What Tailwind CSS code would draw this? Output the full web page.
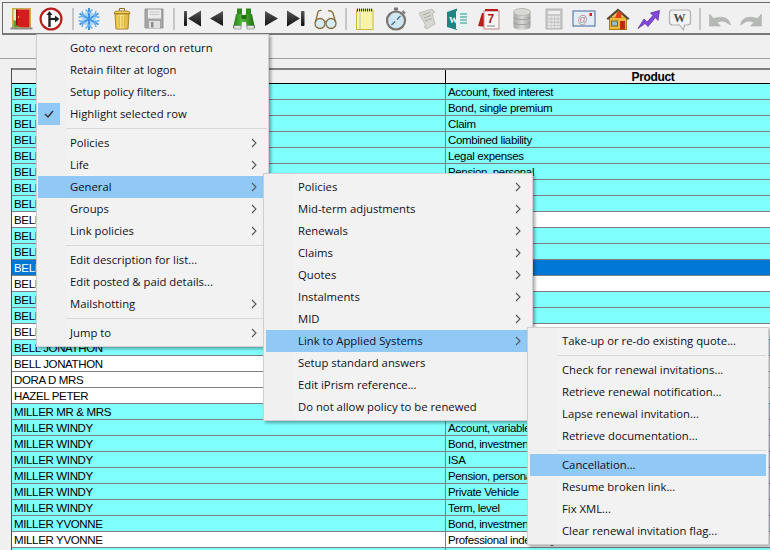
<!doctype html>
<html><head><meta charset="utf-8">
<script src="https://cdn.jsdelivr.net/npm/@tailwindcss/browser@4"></script>
</head>
<body class="m-0">
<div class="relative w-[770px] h-[550px] overflow-hidden bg-[#f0f0f0] font-['Liberation_Sans',sans-serif] text-black">
  <svg class="absolute w-0 h-0" aria-hidden="true"><defs>
    <linearGradient id="dk" x1="0" y1="0" x2="0" y2="1"><stop offset="0" stop-color="#555"/><stop offset=".5" stop-color="#333"/><stop offset="1" stop-color="#111"/></linearGradient>
    <linearGradient id="gold" x1="0" y1="0" x2="1" y2="0"><stop offset="0" stop-color="#e8bd3c"/><stop offset=".45" stop-color="#fbe887"/><stop offset="1" stop-color="#dca92e"/></linearGradient>
    <linearGradient id="gr" x1="0" y1="0" x2="1" y2="0"><stop offset="0" stop-color="#a8a8a6"/><stop offset=".5" stop-color="#d8d8d6"/><stop offset="1" stop-color="#a4a4a2"/></linearGradient>
    <linearGradient id="grn" x1="0" y1="0" x2="1" y2="0"><stop offset="0" stop-color="#257a18"/><stop offset=".4" stop-color="#55b83a"/><stop offset="1" stop-color="#1f6f14"/></linearGradient>
  </defs></svg>
  <!-- toolbar -->
  <div class="flex items-center mt-[2px] ml-[2px] h-[33px] pt-[2px] border-t border-l border-b-2 border-t-[#696969] border-l-[#696969] border-b-[#787878]">
    <svg class="w-6 h-6 ml-[6px] shrink-0" viewBox="0 0 24 24"><rect x="3" y="1" width="19" height="20" fill="#cfa84e"/><rect x="4.5" y="2.5" width="16" height="18" fill="#dff0d0"/><path d="M4.5 13l6 2v5.500h-6z" fill="#4fa52c"/><path d="M7 2.500h13.500v18H12L7 18z" fill="#d41c1c"/><path d="M7 2.500h1.500v16L7 18z" fill="#8d1010"/><circle cx="9.500" cy="10" r=".8" fill="#f3d56e"/><rect x="1.500" y="20.500" width="22" height="2" fill="#8c8c84"/></svg>
    <svg class="w-6 h-6 ml-[6px] shrink-0" viewBox="0 0 24 24"><circle cx="12" cy="12" r="10.400" fill="#fff" stroke="#b81e1e" stroke-width="2.200"/><path d="M10.500 20V7" stroke="#222" stroke-width="2.400" fill="none"/><path d="M7.500 8l3-4 3 4z" fill="#222"/><path d="M11 12h6" stroke="#222" stroke-width="2.200"/><path d="M16 8.500l4.500 3.500-4.500 3.500z" fill="#222"/></svg>
    <div class="w-[2px] h-[22px] ml-[9px] bg-[#c6c6c6] shrink-0"></div>
    <svg class="w-6 h-6 ml-[3px] shrink-0" viewBox="0 0 24 24"><path d="M12 4l7 4v8l-7 4-7-4V8z" fill="#a8d4f6"/><g stroke="#3f92e2" stroke-width="2" fill="none"><path d="M12 1v22M2.500 6.500l19 11M21.500 6.500l-19 11"/></g><g stroke="#69b0ee" stroke-width="1.500" fill="none"><path d="M8.500 2.500L12 6l3.500-3.500M8.500 21.500L12 18l3.500 3.500M1.500 10.500L6.500 9 5 4M22.500 13.500L17.500 15l1.500 5M22.500 10.500L17.500 9 19 4M1.500 13.500L6.500 15 5 20"/></g></svg>
    <svg class="w-6 h-6 ml-[9px] shrink-0" viewBox="0 0 24 24"><path d="M5 7h14l-1 15H6z" fill="url(#gold)" stroke="#ad842a"/><path d="M9 9l.4 11M12 9v11M15 9l-.4 11" stroke="#d8ad3c"/><path d="M4 6.500q0-2 3-2.500h10q3 .5 3 2.500z" fill="#f2d05e" stroke="#ad842a"/><path d="M9.500 3.500V1.500h5v2" fill="none" stroke="#8a6a24"/></svg>
    <svg class="w-6 h-6 ml-[8px] shrink-0" viewBox="0 0 24 24"><path d="M3 2h18v19H3z" fill="#a6a6a6" stroke="#949494"/><rect x="6" y="2.500" width="13" height="9" fill="#ececec"/><path d="M7.500 5h10M7.500 7.500h10" stroke="#c4c4c4"/><rect x="7" y="14" width="11" height="7" fill="#e0e0e0"/><rect x="9" y="15" width="2.500" height="5.500" fill="#8c8c8c"/></svg>
    <div class="w-[2px] h-[22px] ml-[7px] bg-[#c6c6c6] shrink-0"></div>
    <svg class="w-6 h-6 ml-[5px] shrink-0" viewBox="0 0 24 24"><rect x="4" y="4" width="3" height="15" rx=".8" fill="url(#dk)"/><path d="M21 3.500v16L8 11.500z" fill="url(#dk)"/></svg>
    <svg class="w-6 h-6 shrink-0" viewBox="0 0 24 24"><path d="M19 4v15L6 11.500z" fill="url(#dk)"/></svg>
    <svg class="w-6 h-6 ml-[4px] shrink-0" viewBox="0 0 24 24"><rect x="5" y="1.500" width="5" height="6" fill="#2a8a1c"/><rect x="14" y="1.500" width="5" height="6" fill="#2a8a1c"/><path d="M4 7h6.500v3h3V7H20l3 14h-8l-1-6h-4l-1 6H1z" fill="url(#grn)"/><rect x="9.500" y="8" width="5" height="4" fill="#1f6f14"/><rect x="2" y="18.500" width="7" height="3.500" fill="#dfe6da" stroke="#667"  stroke-width=".5"/><rect x="15" y="18.500" width="7" height="3.500" fill="#dfe6da" stroke="#667" stroke-width=".5"/></svg>
    <svg class="w-6 h-6 ml-[5px] shrink-0" viewBox="0 0 24 24"><path d="M4 4v15l13-7.500z" fill="url(#dk)"/></svg>
    <svg class="w-6 h-6 ml-[-1px] shrink-0" viewBox="0 0 24 24"><path d="M3 3.500v16l13-8z" fill="url(#dk)"/><rect x="17" y="4" width="3.500" height="15" rx=".8" fill="url(#dk)"/></svg>
    <svg class="w-6 h-6 ml-[5px] shrink-0" viewBox="0 0 24 24"><g fill="#d4ecf6" stroke="#8a6c3c" stroke-width="1.300"><circle cx="7" cy="16.500" r="5"/><circle cx="18" cy="16.500" r="5"/></g><path d="M11.500 15q1-1 2 0M2.500 15L5 5q.8-2 3.500-1.500M22.500 15L20 6q-1.500-3-5-2" fill="none" stroke="#8a6c3c" stroke-width="1.300"/></svg>
    <div class="w-[2px] h-[22px] ml-[8px] bg-[#c6c6c6] shrink-0"></div>
    <svg class="w-6 h-6 ml-[6px] shrink-0" viewBox="0 0 24 24"><rect x="3.500" y="3" width="16.500" height="19.500" fill="#f8f3a6" stroke="#c9b93c"/><path d="M4 3h16" stroke="#2a20c8" stroke-width="3" stroke-dasharray="1 1"/><path d="M7 5v17" stroke="#a8c8e0"/></svg>
    <svg class="w-6 h-6 ml-[7px] shrink-0" viewBox="0 0 24 24"><rect x="10" y="0.500" width="4" height="3" fill="#777"/><path d="M18.500 4l2.500 2.500" stroke="#777" stroke-width="2"/><circle cx="12" cy="13.500" r="9" fill="#cfe6f0" stroke="#76746c" stroke-width="2.200"/><path d="M7.500 18l5-5 4-4" stroke="#3a6ea0" stroke-width="1.300"/><circle cx="12" cy="13.500" r="1.200" fill="#eee"/></svg>
    <svg class="w-6 h-6 ml-[7px] shrink-0" viewBox="0 0 24 24"><path d="M4 6l13-4 3 3-3 1 3 11q-4 2-8 5l-3-2 1.500-2z" fill="#d6d6d2" stroke="#bdbdb8"/><path d="M8 8l7-2.500M9 11l7-2.500M10 14l7-2.500" stroke="#a8a8a2"/></svg>
    <svg class="w-6 h-6 ml-[7px] shrink-0" viewBox="0 0 24 24"><path d="M1 5l10-3.500V23L1 20z" fill="#1f8582"/><path d="M10 4h12v18H10z" fill="#e6f4f2"/><text x="3" y="16" font-family="Liberation Serif, serif" font-weight="700" font-size="9" fill="#fff">W</text><path d="M14 7h7M14 10h7M14 13h7M14 16h7" stroke="#2f8f8c"/></svg>
    <svg class="w-6 h-6 ml-[7px] shrink-0" viewBox="0 0 24 24"><path d="M1 19L5 6h4v14z" fill="#b81c1c"/><rect x="7" y="4" width="15" height="18" fill="#f4f4f4" stroke="#c48a8a"/><rect x="8" y="2" width="13" height="2" fill="#b81c1c"/><text x="10.500" y="15.500" font-family="Liberation Sans, sans-serif" font-weight="700" font-size="12" fill="#b01818">7</text><path d="M10 19h8" stroke="#888"/></svg>
    <svg class="w-6 h-6 ml-[9px] shrink-0" viewBox="0 0 24 24"><path d="M3.500 5v15c0 3.500 17 3.500 17 0V5z" fill="url(#gr)"/><ellipse cx="12" cy="5" rx="8.500" ry="3.500" fill="#d8d8d4" stroke="#b8b8b4"/><path d="M3.500 10c0 3.500 17 3.500 17 0M3.500 15c0 3.500 17 3.500 17 0" fill="none" stroke="#a2a29e"/></svg>
    <svg class="w-6 h-6 ml-[8px] shrink-0" viewBox="0 0 24 24"><rect x="4" y="2" width="16" height="20" fill="#c8c8c8" stroke="#b4b4b4"/><rect x="6" y="4" width="12" height="3" fill="#efefef"/><path d="M6 10h12M6 13.500h12M6 17h12M6 20h12" stroke="#e8e8e8" stroke-dasharray="2.500 1" stroke-width="2"/></svg>
    <svg class="w-6 h-6 ml-[6px] shrink-0" viewBox="0 0 24 24"><rect x="1" y="4" width="22" height="15" fill="#e4ecf6" stroke="#5d7ea8" stroke-width="1.200"/><text x="5.500" y="15.500" font-family="Liberation Sans, sans-serif" font-size="10" fill="#b58a8a">@</text><rect x="17.500" y="6" width="2.500" height="3" fill="#e01818"/></svg>
    <svg class="w-6 h-6 ml-[10px] shrink-0" viewBox="0 0 24 24"><rect x="3.500" y="10" width="17" height="12.500" fill="#f0ba3a" stroke="#a87c1c"/><path d="M5 10l7-6 7 6z" fill="#f2c75a"/><path d="M.5 11.500L12 1.500l11.500 10-1.500 1.500L12 4.500 2 13z" fill="#5a4a38"/><path d="M9 11l3-8 1.500 3.500L16 4l-1 7z" fill="#e63a18"/><rect x="5.500" y="14" width="6" height="5" fill="#8fc0d8" stroke="#806020"/><rect x="14" y="14" width="5" height="8.500" fill="#c02810"/></svg>
    <svg class="w-6 h-6 ml-[7px] shrink-0" viewBox="0 0 24 24"><path d="M1 21.500l6-9.500 3 3 6-6.500-2.500-2.500 9-2.500-1.500 10-2.500-3-7.500 9-3-3z" fill="#8347dc" stroke="#52289a" stroke-width=".7"/></svg>
    <svg class="w-6 h-6 ml-[7px] shrink-0" viewBox="0 0 24 24"><path d="M1.500 6q0-3 3-3h15q3 0 3 3v9q0 3-3 3h-3l-1 5-4-5h-7q-3 0-3-3z" fill="#f2f2f2" stroke="#b0b0b0" stroke-width="1.200"/><text x="5.500" y="15" font-family="Liberation Serif, serif" font-weight="700" font-size="12" fill="#4a4a4a">W</text></svg>
    <div class="w-[2px] h-[22px] ml-[7px] bg-[#c6c6c6] shrink-0"></div>
    <svg class="w-6 h-6 ml-[7px] shrink-0" viewBox="0 0 24 24"><path d="M1.500 7v12h11l-3.500-3.500q6-3.500 11 1l2.500 1.500q-2-11-17-6.500L1.500 7z" fill="#b6b8b6" stroke="#a4a6a4" stroke-width=".5"/></svg>
    <svg class="w-6 h-6 ml-[7px] shrink-0" viewBox="0 0 24 24"><path d="M22.500 7v12h-11l3.500-3.500q-6-3.500-11 1l-2.500 1.500q2-11 17-6.500L22.500 7z" fill="#b6b8b6" stroke="#a4a6a4" stroke-width=".5"/></svg>
  </div>
  <!-- filter band -->
  <div class="h-[24px] border-b border-[#a0a0a0]"></div>
  <!-- grid -->
  <div class="mt-[9px] ml-[11px] border-l border-[#505050] text-[11.5px] leading-[17px] tracking-[-0.35px]">
    <div class="flex h-[16px] border-t-2 border-b border-t-[#808080] border-b-black font-bold text-[12px] leading-[15px]">
      <div class="w-[434px] border-r border-black shrink-0"></div>
      <div class="w-[414px] shrink-0 text-center">Product</div>
    </div>
    <div class="flex h-4 bg-[#80ffff] border-b border-[#808080]"><div class="w-[434px] pl-[2px] border-r border-[#808080]">BELL JONATHON</div><div class="flex-1 pl-[2px]">Account, fixed interest</div></div>
    <div class="flex h-4 bg-[#80ffff] border-b border-[#808080]"><div class="w-[434px] pl-[2px] border-r border-[#808080]">BELL JONATHON</div><div class="flex-1 pl-[2px]">Bond, single premium</div></div>
    <div class="flex h-4 bg-[#80ffff] border-b border-[#808080]"><div class="w-[434px] pl-[2px] border-r border-[#808080]">BELL JONATHON</div><div class="flex-1 pl-[2px]">Claim</div></div>
    <div class="flex h-4 bg-[#80ffff] border-b border-[#808080]"><div class="w-[434px] pl-[2px] border-r border-[#808080]">BELL JONATHON</div><div class="flex-1 pl-[2px]">Combined liability</div></div>
    <div class="flex h-4 bg-[#80ffff] border-b border-[#808080]"><div class="w-[434px] pl-[2px] border-r border-[#808080]">BELL JONATHON</div><div class="flex-1 pl-[2px]">Legal expenses</div></div>
    <div class="flex h-4 bg-[#80ffff] border-b border-[#808080]"><div class="w-[434px] pl-[2px] border-r border-[#808080]">BELL JONATHON</div><div class="flex-1 pl-[2px]">Pension, personal</div></div>
    <div class="flex h-4 bg-[#80ffff] border-b border-[#808080]"><div class="w-[434px] pl-[2px] border-r border-[#808080]">BELL JONATHON</div><div class="flex-1 pl-[2px]"></div></div>
    <div class="flex h-4 bg-[#80ffff] border-b border-[#808080]"><div class="w-[434px] pl-[2px] border-r border-[#808080]">BELL JONATHON</div><div class="flex-1 pl-[2px]"></div></div>
    <div class="flex h-4 bg-white border-b border-[#808080]"><div class="w-[434px] pl-[2px] border-r border-[#808080]">BELL JONATHON</div><div class="flex-1 pl-[2px]"></div></div>
    <div class="flex h-4 bg-[#80ffff] border-b border-[#808080]"><div class="w-[434px] pl-[2px] border-r border-[#808080]">BELL JONATHON</div><div class="flex-1 pl-[2px]"></div></div>
    <div class="flex h-4 bg-[#80ffff] border-b border-[#808080]"><div class="w-[434px] pl-[2px] border-r border-[#808080]">BELL JONATHON</div><div class="flex-1 pl-[2px]"></div></div>
    <div class="flex h-4 bg-[#0078d7] text-white border-b border-[#808080]"><div class="w-[434px] pl-[2px]">BELL JONATHON</div><div class="flex-1 pl-[2px]"></div></div>
    <div class="flex h-4 bg-white border-b border-[#808080]"><div class="w-[434px] pl-[2px] border-r border-[#808080]">BELL JONATHON</div><div class="flex-1 pl-[2px]"></div></div>
    <div class="flex h-4 bg-[#80ffff] border-b border-[#808080]"><div class="w-[434px] pl-[2px] border-r border-[#808080]">BELL JONATHON</div><div class="flex-1 pl-[2px]"></div></div>
    <div class="flex h-4 bg-[#80ffff] border-b border-[#808080]"><div class="w-[434px] pl-[2px] border-r border-[#808080]">BELL JONATHON</div><div class="flex-1 pl-[2px]"></div></div>
    <div class="flex h-4 bg-white border-b border-[#808080]"><div class="w-[434px] pl-[2px] border-r border-[#808080]">BELL JONATHON</div><div class="flex-1 pl-[2px]"></div></div>
    <div class="flex h-4 bg-[#80ffff] border-b border-[#808080]"><div class="w-[434px] pl-[2px] border-r border-[#808080]">BELL JONATHON</div><div class="flex-1 pl-[2px]"></div></div>
    <div class="flex h-4 bg-white border-b border-[#808080]"><div class="w-[434px] pl-[2px] border-r border-[#808080]">BELL JONATHON</div><div class="flex-1 pl-[2px]"></div></div>
    <div class="flex h-4 bg-white border-b border-[#808080]"><div class="w-[434px] pl-[2px] border-r border-[#808080]">DORA D MRS</div><div class="flex-1 pl-[2px]"></div></div>
    <div class="flex h-4 bg-white border-b border-[#808080]"><div class="w-[434px] pl-[2px] border-r border-[#808080]">HAZEL PETER</div><div class="flex-1 pl-[2px]"></div></div>
    <div class="flex h-4 bg-[#80ffff] border-b border-[#808080]"><div class="w-[434px] pl-[2px] border-r border-[#808080]">MILLER MR &amp; MRS</div><div class="flex-1 pl-[2px]"></div></div>
    <div class="flex h-4 bg-[#80ffff] border-b border-[#808080]"><div class="w-[434px] pl-[2px] border-r border-[#808080]">MILLER WINDY</div><div class="flex-1 pl-[2px]">Account, variable</div></div>
    <div class="flex h-4 bg-[#80ffff] border-b border-[#808080]"><div class="w-[434px] pl-[2px] border-r border-[#808080]">MILLER WINDY</div><div class="flex-1 pl-[2px]">Bond, investment</div></div>
    <div class="flex h-4 bg-[#80ffff] border-b border-[#808080]"><div class="w-[434px] pl-[2px] border-r border-[#808080]">MILLER WINDY</div><div class="flex-1 pl-[2px]">ISA</div></div>
    <div class="flex h-4 bg-[#80ffff] border-b border-[#808080]"><div class="w-[434px] pl-[2px] border-r border-[#808080]">MILLER WINDY</div><div class="flex-1 pl-[2px]">Pension, personal</div></div>
    <div class="flex h-4 bg-[#80ffff] border-b border-[#808080]"><div class="w-[434px] pl-[2px] border-r border-[#808080]">MILLER WINDY</div><div class="flex-1 pl-[2px]">Private Vehicle</div></div>
    <div class="flex h-4 bg-[#80ffff] border-b border-[#808080]"><div class="w-[434px] pl-[2px] border-r border-[#808080]">MILLER WINDY</div><div class="flex-1 pl-[2px]">Term, level</div></div>
    <div class="flex h-4 bg-[#80ffff] border-b border-[#808080]"><div class="w-[434px] pl-[2px] border-r border-[#808080]">MILLER YVONNE</div><div class="flex-1 pl-[2px]">Bond, investment</div></div>
    <div class="flex h-4 bg-white border-b border-[#808080]"><div class="w-[434px] pl-[2px] border-r border-[#808080]">MILLER YVONNE</div><div class="flex-1 pl-[2px]">Professional indemnity</div></div>
    <div class="flex h-4 bg-[#80ffff] border-b border-[#808080]"><div class="w-[434px] border-r border-[#808080]"></div><div class="flex-1"></div></div>
  </div>

  <!-- menu 1 -->
  <div class="absolute left-[36px] top-[34px] w-[233px] h-[313px] bg-[linear-gradient(to_right,#f0f0f0_30px,#f2f2f2_30px)] border border-[#cfcfcf] shadow-[2px_2px_3px_rgba(0,0,0,0.35)] py-[2px] px-[1px] font-['Open_Sans',sans-serif] text-[11.3px] text-[#10101a]">
    <div class="flex items-center h-[22px] pl-[32px]">Goto next record on return</div>
    <div class="flex items-center h-[22px] pl-[32px]">Retain filter at logon</div>
    <div class="flex items-center h-[22px] pl-[32px]">Setup policy filters...</div>
    <div class="relative flex items-center h-[22px] pl-[32px]"><div class="absolute left-0 top-0 w-[22px] h-[22px] bg-[#90c8f6] flex items-center justify-center"><svg class="w-3 h-3" viewBox="0 0 12 12"><path d="M2 6l3 3 5-6" fill="none" stroke="#333" stroke-width="1.500"/></svg></div>Highlight selected row</div>
    <div class="h-[7px] ml-[28px] flex items-center"><div class="h-[1px] w-full bg-[#d8d8d8]"></div></div>
    <div class="flex items-center justify-between h-[22px] pl-[32px] pr-[10px]">Policies<svg class="w-[6px] h-[10px]" viewBox="0 0 6 10"><path d="M1 1l4 4-4 4" fill="none" stroke="#555" stroke-width="1.100"/></svg></div>
    <div class="flex items-center justify-between h-[22px] pl-[32px] pr-[10px]">Life<svg class="w-[6px] h-[10px]" viewBox="0 0 6 10"><path d="M1 1l4 4-4 4" fill="none" stroke="#555" stroke-width="1.100"/></svg></div>
    <div class="flex items-center justify-between h-[22px] pl-[32px] pr-[10px] bg-[#90c8f6]">General<svg class="w-[6px] h-[10px]" viewBox="0 0 6 10"><path d="M1 1l4 4-4 4" fill="none" stroke="#555" stroke-width="1.100"/></svg></div>
    <div class="flex items-center justify-between h-[22px] pl-[32px] pr-[10px]">Groups<svg class="w-[6px] h-[10px]" viewBox="0 0 6 10"><path d="M1 1l4 4-4 4" fill="none" stroke="#555" stroke-width="1.100"/></svg></div>
    <div class="flex items-center justify-between h-[22px] pl-[32px] pr-[10px]">Link policies<svg class="w-[6px] h-[10px]" viewBox="0 0 6 10"><path d="M1 1l4 4-4 4" fill="none" stroke="#555" stroke-width="1.100"/></svg></div>
    <div class="h-[7px] ml-[28px] flex items-center"><div class="h-[1px] w-full bg-[#d8d8d8]"></div></div>
    <div class="flex items-center h-[22px] pl-[32px]">Edit description for list...</div>
    <div class="flex items-center h-[22px] pl-[32px]">Edit posted &amp; paid details...</div>
    <div class="flex items-center justify-between h-[22px] pl-[32px] pr-[10px]">Mailshotting<svg class="w-[6px] h-[10px]" viewBox="0 0 6 10"><path d="M1 1l4 4-4 4" fill="none" stroke="#555" stroke-width="1.100"/></svg></div>
    <div class="h-[7px] ml-[28px] flex items-center"><div class="h-[1px] w-full bg-[#d8d8d8]"></div></div>
    <div class="flex items-center justify-between h-[22px] pl-[32px] pr-[10px]">Jump to<svg class="w-[6px] h-[10px]" viewBox="0 0 6 10"><path d="M1 1l4 4-4 4" fill="none" stroke="#555" stroke-width="1.100"/></svg></div>
  </div>

  <!-- menu 2 -->
  <div class="absolute left-[263px] top-[173px] w-[270px] h-[248px] bg-[linear-gradient(to_right,#f0f0f0_30px,#f2f2f2_30px)] border border-[#cfcfcf] shadow-[2px_2px_3px_rgba(0,0,0,0.35)] py-[2px] px-[2px] font-['Open_Sans',sans-serif] text-[11.3px] text-[#10101a]">
    <div class="flex items-center justify-between h-[22px] pl-[32px] pr-[9px]">Policies<svg class="w-[6px] h-[10px]" viewBox="0 0 6 10"><path d="M1 1l4 4-4 4" fill="none" stroke="#555" stroke-width="1.100"/></svg></div>
    <div class="flex items-center justify-between h-[22px] pl-[32px] pr-[9px]">Mid-term adjustments<svg class="w-[6px] h-[10px]" viewBox="0 0 6 10"><path d="M1 1l4 4-4 4" fill="none" stroke="#555" stroke-width="1.100"/></svg></div>
    <div class="flex items-center justify-between h-[22px] pl-[32px] pr-[9px]">Renewals<svg class="w-[6px] h-[10px]" viewBox="0 0 6 10"><path d="M1 1l4 4-4 4" fill="none" stroke="#555" stroke-width="1.100"/></svg></div>
    <div class="flex items-center justify-between h-[22px] pl-[32px] pr-[9px]">Claims<svg class="w-[6px] h-[10px]" viewBox="0 0 6 10"><path d="M1 1l4 4-4 4" fill="none" stroke="#555" stroke-width="1.100"/></svg></div>
    <div class="flex items-center justify-between h-[22px] pl-[32px] pr-[9px]">Quotes<svg class="w-[6px] h-[10px]" viewBox="0 0 6 10"><path d="M1 1l4 4-4 4" fill="none" stroke="#555" stroke-width="1.100"/></svg></div>
    <div class="flex items-center justify-between h-[22px] pl-[32px] pr-[9px]">Instalments<svg class="w-[6px] h-[10px]" viewBox="0 0 6 10"><path d="M1 1l4 4-4 4" fill="none" stroke="#555" stroke-width="1.100"/></svg></div>
    <div class="flex items-center justify-between h-[22px] pl-[32px] pr-[9px]">MID<svg class="w-[6px] h-[10px]" viewBox="0 0 6 10"><path d="M1 1l4 4-4 4" fill="none" stroke="#555" stroke-width="1.100"/></svg></div>
    <div class="flex items-center justify-between h-[22px] pl-[32px] pr-[9px] bg-[#90c8f6]">Link to Applied Systems<svg class="w-[6px] h-[10px]" viewBox="0 0 6 10"><path d="M1 1l4 4-4 4" fill="none" stroke="#555" stroke-width="1.100"/></svg></div>
    <div class="flex items-center h-[22px] pl-[32px]">Setup standard answers</div>
    <div class="flex items-center h-[22px] pl-[32px]">Edit iPrism reference...</div>
    <div class="flex items-center h-[22px] pl-[32px]">Do not allow policy to be renewed</div>
  </div>

  <!-- menu 3 -->
  <div class="absolute left-[527px] top-[327px] w-[242px] h-[218px] bg-[linear-gradient(to_right,#f0f0f0_30px,#f2f2f2_30px)] border border-[#cfcfcf] shadow-[2px_2px_3px_rgba(0,0,0,0.35)] py-[2px] px-[2px] font-['Open_Sans',sans-serif] text-[11.3px] text-[#10101a]">
    <div class="flex items-center h-[22px] pl-[32px]">Take-up or re-do existing quote...</div>
    <div class="h-[7px] ml-[28px] flex items-center"><div class="h-[1px] w-full bg-[#d8d8d8]"></div></div>
    <div class="flex items-center h-[22px] pl-[32px]">Check for renewal invitations...</div>
    <div class="flex items-center h-[22px] pl-[32px]">Retrieve renewal notification...</div>
    <div class="flex items-center h-[22px] pl-[32px]">Lapse renewal invitation...</div>
    <div class="flex items-center h-[22px] pl-[32px]">Retrieve documentation...</div>
    <div class="h-[7px] ml-[28px] flex items-center"><div class="h-[1px] w-full bg-[#d8d8d8]"></div></div>
    <div class="flex items-center h-[22px] pl-[32px] bg-[#90c8f6]">Cancellation...</div>
    <div class="flex items-center h-[22px] pl-[32px]">Resume broken link...</div>
    <div class="flex items-center h-[22px] pl-[32px]">Fix XML...</div>
    <div class="flex items-center h-[22px] pl-[32px]">Clear renewal invitation flag...</div>
  </div>
</div>
</body></html>
